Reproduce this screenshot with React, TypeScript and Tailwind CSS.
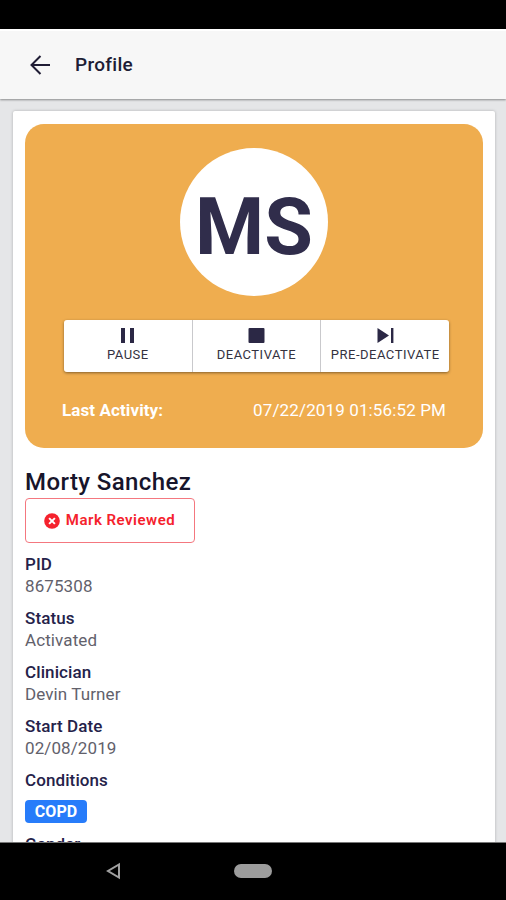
import type { ReactNode } from 'react';

interface ActionButtonProps {
  label: string;
  icon: ReactNode;
}

interface Field {
  label: string;
  value: string;
}

const FIELDS: Field[] = [
  { label: 'PID', value: '8675308' },
  { label: 'Status', value: 'Activated' },
  { label: 'Clinician', value: 'Devin Turner' },
  { label: 'Start Date', value: '02/08/2019' },
];

const ACTIONS: ActionButtonProps[] = [
  {
    label: 'PAUSE',
    icon: <path d="M2 1h4v15H2zM11 1h4v15h-4z" />,
  },
  {
    label: 'DEACTIVATE',
    icon: <rect x="0.5" y="1" width="16" height="15" rx="1" />,
  },
  {
    label: 'PRE-DEACTIVATE',
    icon: <path d="M0.5 1L12 8.5L0.5 16zM14 1h2.4v15h-2.4z" />,
  },
];

function ActionButton({ label, icon }: ActionButtonProps) {
  return (
    <button className="flex flex-1 flex-col items-center border-l border-[#c9c9cc] bg-white pt-[7px] first:rounded-l-[3px] first:border-l-0 last:rounded-r-[3px]">
      <svg width="17" height="17" viewBox="0 0 17 17" className="fill-[#2b2845]">
        {icon}
      </svg>
      <span className="mt-[3px] text-[13px] leading-4 tracking-[0.5px] whitespace-nowrap text-[#34323f]">{label}</span>
    </button>
  );
}

function Header() {
  return (
    <header className="relative flex h-[70px] shrink-0 items-center border-t-2 border-white bg-[#f7f7f7] pl-[30px] shadow-[0_1px_2px_rgba(0,0,0,0.4)]">
      <svg width="20" height="20" viewBox="0 0 20 20" fill="none" stroke="#201d35" strokeWidth="2" className="mb-px">
        <path d="M20 10H2M10.5 1L1.5 10L10.5 19" />
      </svg>
      <h1 className="ml-[25px] text-[19px] leading-6 font-medium tracking-[0.3px] text-[#201d35]">Profile</h1>
    </header>
  );
}

function SummaryCard() {
  return (
    <section className="flex h-[324px] flex-col items-center rounded-[19px] bg-[#efad4f] pt-6">
      {/* Avatar */}
      <div className="flex size-[148px] items-center justify-center rounded-full bg-white">
        <span className="mt-[10px] text-[79px] leading-none font-bold text-[#302d4b]">MS</span>
      </div>

      {/* Actions */}
      <div className="mt-6 ml-[5px] flex h-[52px] w-[385px] rounded-[3px] shadow-[0_1px_3px_rgba(0,0,0,0.45)]">
        {ACTIONS.map((action) => (
          <ActionButton key={action.label} {...action} />
        ))}
      </div>

      <div className="mt-[26px] flex w-[384px] justify-between text-[17px] leading-6 text-white">
        <span className="font-bold tracking-[0.1px]">Last Activity:</span>
        <span className="tracking-[0.13px]">07/22/2019 01:56:52 PM</span>
      </div>
    </section>
  );
}

export default function App() {
  return (
    <div className="flex h-[900px] w-[506px] flex-col overflow-hidden bg-black font-['Roboto',sans-serif]">
      <div className="h-[29px] shrink-0" />
      <Header />

      <main className="min-h-0 flex-1 overflow-hidden bg-[#e5e6e8] pt-3 pr-[11px] pl-[13px]">
        <div className="h-[900px] rounded-[2px] bg-white px-3 pt-[13px] shadow-[0_0_3px_rgba(0,0,0,0.25)]">
          <SummaryCard />

          <h2 className="mt-5 text-[24px] leading-7 font-medium tracking-[0.4px] text-[#17152b]">Morty Sanchez</h2>
          <button className="mt-[2px] flex h-[45px] w-[170px] items-center justify-center gap-[6px] rounded-[4px] border border-[#f4777f] pr-px text-[15px] font-semibold tracking-[0.5px] text-[#f5222d]">
            <svg width="16" height="16" viewBox="0 0 16 16">
              <circle cx="8" cy="8" r="7.8" fill="#f5222d" />
              <path d="M5.1 5.1L10.9 10.9M10.9 5.1L5.1 10.9" stroke="white" strokeWidth="2" />
            </svg>
            Mark Reviewed
          </button>

          {/* Patient details */}
          <dl className="mt-[10px] text-[17px] leading-[22px] tracking-[0.1px]">
            {FIELDS.map((field) => (
              <div key={field.label} className="mb-[10px]">
                <dt className="font-medium text-[#25224a]">{field.label}</dt>
                <dd className="text-[#62616b]">{field.value}</dd>
              </div>
            ))}
            <div className="mb-[10px]">
              <dt className="font-medium text-[#25224a]">Conditions</dt>
              <dd className="mt-[9px] flex h-[23px] w-[62px] items-center justify-center rounded-[4px] bg-[#277cfa] text-[16px] font-bold text-white">
                COPD
              </dd>
            </div>
            <div>
              <dt className="font-medium text-[#25224a]">Gender</dt>
            </div>
          </dl>
        </div>
      </main>

      {/* System navigation */}
      <nav className="flex h-[58px] shrink-0 items-center border-t border-[#777] pb-[2px] pl-[105px]">
        <svg width="16" height="18" viewBox="0 0 16 18" fill="none" stroke="#a0a0a0" strokeWidth="2">
          <path d="M14 2.5V15.5L3 9Z" />
        </svg>
        <div className="ml-[113px] h-[14px] w-[38px] rounded-full bg-[#9c9c9c]" />
      </nav>
    </div>
  );
}
